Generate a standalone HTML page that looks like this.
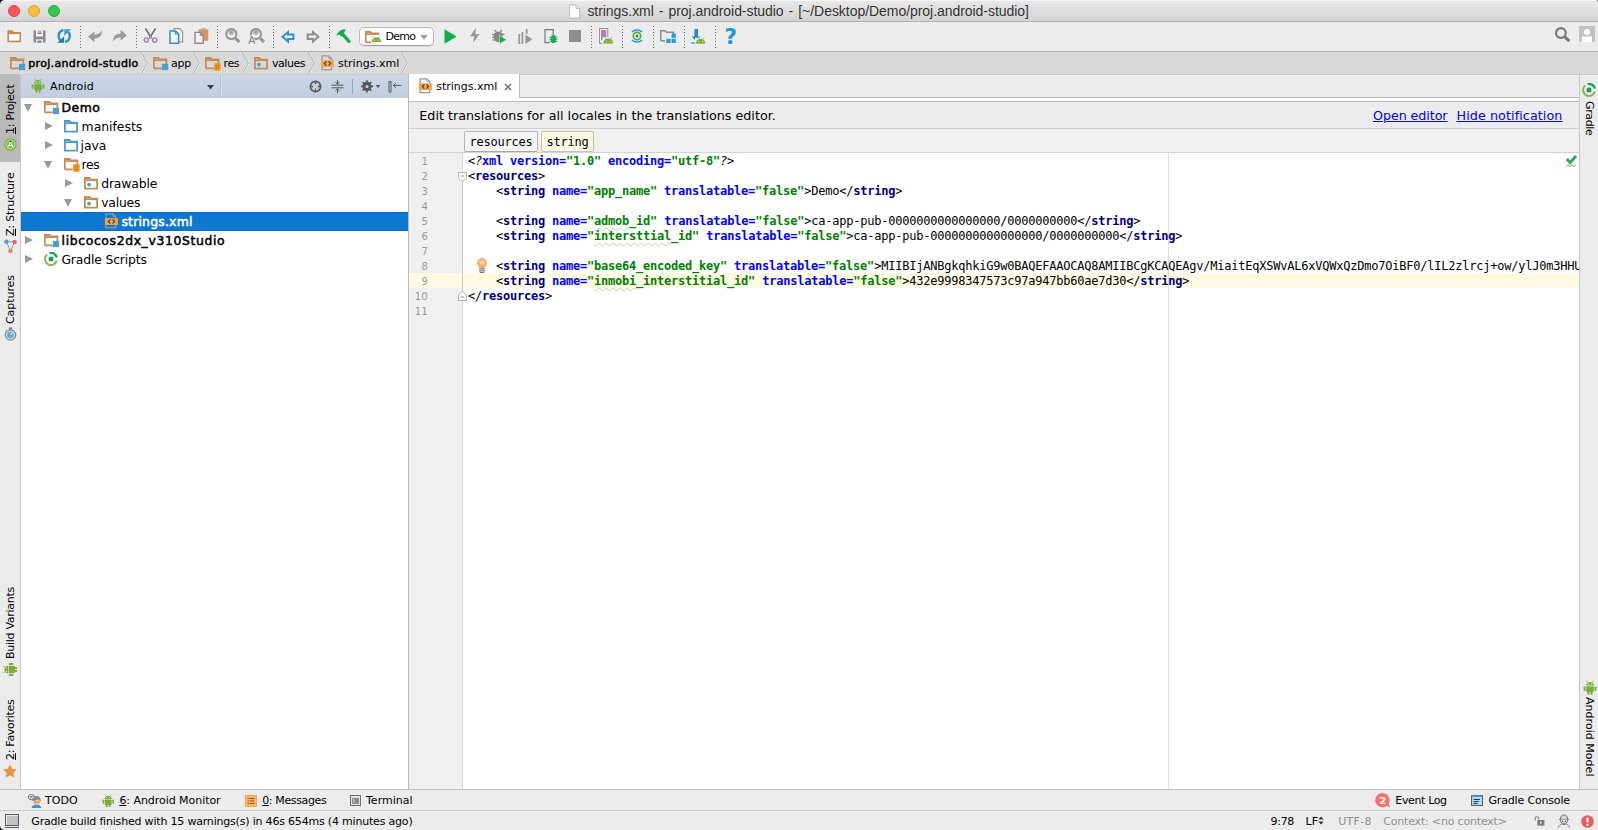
<!DOCTYPE html>
<html><head><meta charset="utf-8"><title>strings.xml - proj.android-studio</title>
<style>
*{box-sizing:border-box;margin:0;padding:0}
html,body{width:1598px;height:830px;overflow:hidden;background:#ececec}
body{font-family:"DejaVu Sans","Liberation Sans",sans-serif;font-size:11px;color:#000;position:relative}
.abs,.ic,.tx{position:absolute}
.tx{white-space:nowrap;line-height:1}
#title{left:0;top:0;width:1598px;height:22px;background:linear-gradient(#e9e9e9,#d3d3d3);border-bottom:1px solid #b2b2b2;box-shadow:inset 0 1px 0 #f5f5f5}
#title .t{position:absolute;left:587px;top:3px;font-family:"Liberation Sans",sans-serif;font-size:14px;letter-spacing:.03px;color:#404040;white-space:nowrap;line-height:16px}
.tl{position:absolute;top:5px;width:12px;height:12px;border-radius:50%}
#toolbar{left:0;top:22px;width:1598px;height:30px;background:#ececec;border-bottom:1px solid #afafaf;box-shadow:inset 0 -1px 0 #f0f0f0,inset 0 1px 0 #f0f0f0}
.sep{position:absolute;top:4px;width:1px;height:23px;background:repeating-linear-gradient(#6e6e6e 0 1px,transparent 1px 3px)}
#combo{position:absolute;left:359px;top:5px;width:75px;height:19px;background:#fff;border:1px solid #b9b9b9;border-bottom-color:#a2a2a2;border-radius:5px;box-shadow:0 1px 0 rgba(0,0,0,.06)}
#nav{left:0;top:52px;width:1598px;height:22px;background:#d9d9d9}
.chev{position:absolute;top:0;width:7px;height:22px}
#lstripe{left:0;top:74px;width:21px;height:715px;background:#ececec;border-right:1px solid #c6c6c6;border-top:1px solid #c8c8c8}
#rstripe{left:1579px;top:74px;width:19px;height:715px;background:#ececec;border-left:1px solid #c8c8c8;border-top:1px solid #c8c8c8}
.vt{position:absolute;white-space:nowrap;line-height:12px;height:12px;font-size:11px;transform-origin:0 0}
.vl{transform:rotate(-90deg)}
.vr{transform:rotate(90deg)}
#phead{left:21px;top:74px;width:387px;height:24px;background:linear-gradient(#cbd7e8,#c1cee0);border-top:1px solid #cdcdcd;border-bottom:1px solid #c8c8c8}
#tree{left:21px;top:98px;width:387px;height:691px;background:#fff;font-size:12.4px}
.row{position:absolute;left:0;width:387px;height:19px;white-space:nowrap}
.row .lb{position:absolute;top:0;line-height:19px}
.row.sel{background:#0d78d0;color:#fff;box-shadow:inset 0 1px 0 #0a6cc6,inset 0 -1px 0 #0a6cc6}
.b{font-weight:bold}
.arr{position:absolute;width:0;height:0}
.arr.r{border-left:8px solid #9a9a9a;border-top:4.5px solid transparent;border-bottom:4.5px solid transparent;top:5px}
.arr.d{border-top:8px solid #9a9a9a;border-left:4.5px solid transparent;border-right:4.5px solid transparent;top:6px}
#split{left:408px;top:74px;width:1px;height:715px;background:#b9b9b9}
#tabs{left:409px;top:74px;width:1170px;height:24px;background:#ececec;border-bottom:1px solid #bababa;border-top:1px solid #c8c8c8}
#tab1{position:absolute;left:0;top:-1px;width:111px;height:27px;background:#fff;border-right:1px solid #b9b9b9}
#strip{left:409px;top:98px;width:1170px;height:3px;background:#fff}
#notif{left:409px;top:101px;width:1170px;height:28px;background:#ececec;border-top:1px solid #bdbdbd;border-bottom:1px solid #cfcfcf;font-size:12.7px}
#notif a{color:#0000ee;text-decoration:underline;text-underline-offset:1px}
#crumbs{left:409px;top:129px;width:1170px;height:24px;background:#f0f0f0;border-bottom:1px solid #d4d4d4}
.cb{position:absolute;top:2px;height:21px;border:1px solid #b4b4b4;border-bottom-color:#a8a8a8;border-radius:2px;background:#f4f4f4;box-shadow:inset 0 -1px 0 #fcfcfc;font-family:"DejaVu Sans Mono","Liberation Mono",monospace;font-size:12px;letter-spacing:-.224px;line-height:21px;text-align:center}
#editor{left:409px;top:153px;width:1170px;height:636px;background:#fff;overflow:hidden}
#gutter{left:0;top:0;width:54px;height:637px;background:#f0f0f0;border-right:1px solid #d5d5d5}
#code{position:absolute;left:59px;top:1px;font-family:"DejaVu Sans Mono","Liberation Mono",monospace;font-size:12px;line-height:15px;white-space:pre;letter-spacing:-0.224px;color:#000}
#code .l{height:15px;display:block}
.tg{color:#000080;font-weight:bold}.an{color:#0000ff;font-weight:bold}.av{color:#008000;font-weight:bold}
.ty{text-decoration:underline wavy #bdd4b1;text-decoration-thickness:1px;text-underline-offset:2px}
.ln{position:absolute;font-size:11px;color:#999;height:15px;line-height:15px}
.fold{position:absolute;left:49px;width:9px;height:10px}
#bstripe{left:0;top:789px;width:1598px;height:21px;background:#ececec;border-top:1px solid #bebebe}
#status{left:0;top:810px;width:1598px;height:20px;background:#ececec;border-top:1px solid #c6c6c6}
.g{color:#8c8c8c}
</style></head><body>
<div id="title" class="abs"><div class="tl" style="left:8px;background:#fd5257;border:.5px solid #e2444a"></div><div class="tl" style="left:28px;background:#fdbc40;border:.5px solid #dea033"></div><div class="tl" style="left:48px;background:#34c84a;border:.5px solid #27aa35"></div><svg class="ic" style="left:569px;top:3.5px" width="12" height="15" viewBox="0 0 13 15"><path d="M.4.400h7.200l4 4v10.200H.4z" fill="#fff" stroke="#adadad" stroke-width=".9"/><path d="M7.600.4v4h4" fill="#ededed" stroke="#adadad" stroke-width=".8"/></svg><span class="tx" style="left:587.4px;top:4.16px;font-size:14px;font-family:'Liberation Sans',sans-serif;letter-spacing:-0.046px;color:#333;word-spacing:1.2px;">strings.xml - proj.android-studio - [~/Desktop/Demo/proj.android-studio]</span></div>
<div id="toolbar" class="abs"><svg class="ic" style="left:7px;top:8px" width="15" height="13" viewBox="0 0 15 13" ><path d="M.4 12.200V.2h5l1.600 1.800h7v10.200z" fill="#c48d58"/><path d="M2 4.200h10.400v6.400H2z" fill="#fff"/></svg><svg class="ic" style="left:33px;top:8px" width="13" height="13" viewBox="0 0 13 13" ><path d="M.5.5h12v12H.5z" fill="#8a8a8a"/><path d="M3 .5h7v6H3z" fill="#fff"/><path d="M4.6 2h4M4.6 3.6h4" stroke="#555" stroke-width=".9"/><path d="M3 9.3h7v3.2H3z" fill="#ececec"/><path d="M4.5 10.6h4v1.9h-4z" fill="#3b8fbe"/></svg><svg class="ic" style="left:57px;top:7px" width="15" height="14" viewBox="0 0 15 14" ><path d="M6.400 1.100A5.200 5.900 0 0 0 3.400 11.400" fill="none" stroke="#2d8dbd" stroke-width="2.200"/><path d="M.2 13.700h6.900V7.200z" fill="#1f80b2"/><path d="M8 12.900A5.200 5.900 0 0 0 11 2.600" fill="none" stroke="#2d8dbd" stroke-width="2.200"/><path d="M14.200.3H7.300v6.500z" fill="#3f9bc8"/></svg><svg class="ic" style="left:88px;top:8px" width="14" height="13" viewBox="0 0 14 13" ><path d="M0 6.6L6.4 1.6v3.2c3.6-.4 6.6-2 7.4-4.6C14.2 5 12 8.400 6.400 8.600V12.200z" fill="#9b9b9b"/></svg><svg class="ic" style="left:113px;top:7px" width="14" height="13" viewBox="0 0 14 13" ><g transform="rotate(180 7 6.5)"><path d="M0 6.6L6.4 1.6v3.2c3.6-.4 6.6-2 7.4-4.6C14.2 5 12 8.400 6.400 8.600V12.200z" fill="#9b9b9b"/></g></svg><svg class="ic" style="left:143px;top:6px" width="15" height="15" viewBox="0 0 15 15" ><path d="M2.400.4L8.600 10.400M12.600.4L6.400 10.400" stroke="#666" stroke-width="1.500" fill="none"/><circle cx="3.300" cy="12" r="2.100" fill="none" stroke="#b27cc8" stroke-width="1.500"/><circle cx="11.700" cy="12" r="2.100" fill="none" stroke="#b27cc8" stroke-width="1.500"/><rect x="6.700" y="8" width="1.600" height="1.600" fill="#fff" stroke="#6a6a6a" stroke-width=".5"/></svg><svg class="ic" style="left:169px;top:6px" width="15" height="16" viewBox="0 0 15 16" ><path d="M5 .600h5.600l3 3v10.200H5z" fill="#eee" stroke="#999" stroke-width="1.200"/><path d="M1 3h5.600l3 3v9.200H1z" fill="#f1f1f1" stroke="#3b8fbe" stroke-width="1.500"/><path d="M6.400 3v3.200h3.200" fill="none" stroke="#3b8fbe" stroke-width="1"/></svg><svg class="ic" style="left:194px;top:6px" width="15" height="16" viewBox="0 0 15 16" ><path d="M4.500 1.400h9.800v11.400H4.500z" fill="#d9965a"/><path d="M7.400.5h4v1.200h-4z" fill="#ececec" stroke="#888" stroke-width=".5"/><path d="M1 4.400h5.400l2.800 2.800v8H1z" fill="#f1f1f1" stroke="#8a8a8a" stroke-width="1.400"/><path d="M6.200 4.400v3h3" fill="none" stroke="#8a8a8a" stroke-width="1"/></svg><svg class="ic" style="left:225px;top:6px" width="16" height="16" viewBox="0 0 16 16" ><radialGradient id="g9a" cx=".5" cy=".32" r=".42"><stop offset="0" stop-color="#8f8f8f"/><stop offset=".35" stop-color="#b0b0b0"/><stop offset="1" stop-color="#f6f6f6"/></radialGradient><circle cx="6.300" cy="6.100" r="5" fill="url(#g9a)" stroke="#9a9a9a" stroke-width="2.300"/><path d="M10.400 10.200l4 4" stroke="#9a9a9a" stroke-width="3.200" stroke-linecap="butt"/></svg><svg class="ic" style="left:248.2px;top:6px" width="17" height="17" viewBox="0 0 17 17" ><radialGradient id="g10b" cx=".5" cy=".32" r=".42"><stop offset="0" stop-color="#8f8f8f"/><stop offset=".35" stop-color="#b0b0b0"/><stop offset="1" stop-color="#f6f6f6"/></radialGradient><circle cx="7.900" cy="6" r="5" fill="url(#g10b)" stroke="#9a9a9a" stroke-width="2.300"/><path d="M12 10.100l4 4" stroke="#9a9a9a" stroke-width="3.200" stroke-linecap="butt"/><text x=".3" y="16.200" font-family="Liberation Sans,sans-serif" font-size="10.500" fill="#808080" stroke="#ececec" stroke-width="1.400" paint-order="stroke">A</text></svg><svg class="ic" style="left:280.6px;top:7.699999999999999px" width="14" height="14" viewBox="0 0 14 14" ><path d="M1.600 6.800L7 2.100v2.500h5.400v4.400H7v2.500z" fill="none" stroke="#2e95c5" stroke-width="2" stroke-linejoin="miter"/></svg><svg class="ic" style="left:306.4px;top:7.699999999999999px" width="14" height="14" viewBox="0 0 14 14" ><path d="M12.400 6.800L7 2.100v2.500H1.600v4.400H7v2.500z" fill="none" stroke="#8e8e8e" stroke-width="2" stroke-linejoin="miter"/></svg><svg class="ic" style="left:336px;top:7px" width="15" height="15" viewBox="0 0 15 15" ><path d="M6 4.600L13 12.400" stroke="#12ad4d" stroke-width="3.200" stroke-linecap="round"/><path d="M.2 6.600C1.800 2.800 5.600 0 9.600.4L8 4 5.200 7.400 3.400 5.600z" fill="#12ad4d"/></svg><svg class="ic" style="left:444px;top:7px" width="13" height="15" viewBox="0 0 13 15" ><path d="M.5.2L12.600 7.500.5 14.800z" fill="#12ad4d"/></svg><svg class="ic" style="left:470px;top:6px" width="10" height="15" viewBox="0 0 10 15" ><path d="M5.800 0L0 8.200h4L3.200 15l6.400-9H5.400z" fill="#9a9a9a"/></svg><svg class="ic" style="left:492px;top:7px" width="15" height="15" viewBox="0 0 15 15" ><ellipse cx="6.200" cy="7.800" rx="4.600" ry="5.400" fill="#858585"/><path d="M2.600 1l2 2.400M9.800 1l-2 2.400M0 5.400h3M0 8.200h3M0 11h3M9.400 5.400h3" stroke="#858585" stroke-width="1.200"/><path d="M7.400 6.400L14.600 10.700 7.400 15z" fill="#12ad4d" stroke="#ececec" stroke-width=".6"/></svg><svg class="ic" style="left:518px;top:7px" width="15" height="15" viewBox="0 0 15 15" ><path d="M1.200 5v10M4.400 3v12" stroke="#999" stroke-width="1.800"/><path d="M7.800 0h1.800v5H7.800z" fill="#999"/><path d="M7.400 5.600L14.400 10.300 7.400 15z" fill="#999"/></svg><svg class="ic" style="left:544px;top:7px" width="14" height="15" viewBox="0 0 14 15" ><path d="M1 .600h8.200v13H1z" fill="none" stroke="#777" stroke-width="1.200"/><path d="M5.200 6.600h8.800v8.400H5.200z" fill="#ececec"/><ellipse cx="9.400" cy="10.400" rx="2.600" ry="3.800" fill="#12ad4d"/><path d="M5.400 8.200h8M5.400 10.400h8M5.400 12.600h8M7.600 5.800l1 1.400M11.200 5.800l-1 1.400" stroke="#12ad4d" stroke-width="1"/></svg><svg class="ic" style="left:569px;top:8px" width="12" height="12" viewBox="0 0 12 12" ><rect width="12" height="12" fill="#8f8f8f"/></svg><svg class="ic" style="left:599px;top:6px" width="15" height="16" viewBox="0 0 15 16" ><path d="M.600.5h8.200v14.800H.600z" fill="#fff" stroke="#8a8a8a" stroke-width="1"/><path d="M2 2h5.400v10.400H2z" fill="#b07fc4"/><path d="M3.400 9h11.600v7H3.400z" fill="#ececec"/><path d="M4.4 15.2a4.8 4.8 0 0 1 9.6 0z" fill="#7dad36"/><path d="M6.5600000000000005 10.6l-1-1.6M11.84 10.6l1-1.6" stroke="#7dad36" stroke-width=".8" fill="none"/><circle cx="7.28" cy="13.184000000000001" r=".55" fill="#fff"/><circle cx="11.120000000000001" cy="13.184000000000001" r=".55" fill="#fff"/><path d="M4.400 15.600h9.600v.4H4.400z" fill="#7dad36"/></svg><svg class="ic" style="left:630px;top:7px" width="14" height="14" viewBox="0 0 14 14" ><circle cx="7" cy="7" r="3.700" fill="none" stroke="#62a83c" stroke-width="1.700"/><circle cx="7" cy="7" r="1.500" fill="#1d9e4c"/><path d="M2 3C4.400.2 9.600.2 12 3" fill="none" stroke="#1d9ce0" stroke-width="1.500"/><path d="M2 11c2.400 2.800 7.600 2.800 10 0" fill="none" stroke="#1d9ce0" stroke-width="1.500"/></svg><svg class="ic" style="left:660px;top:8px" width="16" height="13" viewBox="0 0 16 13" ><path d="M.7 10.800V.7h4.400l1.400 1.600h7v2" fill="none" stroke="#8a8a8a" stroke-width="1.400"/><path d="M.7 10.800h4.500" stroke="#8a8a8a" stroke-width="1.400"/><rect x="11.600" y="3.600" width="4.200" height="4.200" fill="#1d9ce0"/><rect x="6.400" y="8.800" width="4.200" height="4.200" fill="#1d9ce0"/><rect x="11.600" y="8.800" width="4.200" height="4.200" fill="#1d9ce0"/></svg><svg class="ic" style="left:691px;top:7px" width="15" height="15" viewBox="0 0 15 15" ><path d="M3.400 0h3.600v7.400h2.600L5.200 12.400.8 7.400h2.600z" fill="#1a8cc8"/><path d="M.4 13.400h3.400v1.200H.4z" fill="#1a8cc8"/><path d="M4 8.600h11v6.400H4z" fill="#ececec"/><path d="M4.8 14.600000000000001a4.8 4.8 0 0 1 9.6 0z" fill="#7dad36"/><path d="M6.96 10.0l-1-1.6M12.239999999999998 10.0l1-1.6" stroke="#7dad36" stroke-width=".8" fill="none"/><circle cx="7.68" cy="12.584" r=".55" fill="#fff"/><circle cx="11.52" cy="12.584" r=".55" fill="#fff"/><path d="M4.800 15h9.600" stroke="#7dad36" stroke-width=".4"/></svg><svg class="ic" style="left:1554px;top:4px" width="16" height="17" viewBox="0 0 16 17" ><circle cx="6.900" cy="7.100" r="4.900" fill="none" stroke="#7a7a7a" stroke-width="2.200"/><path d="M10.800 10.800l3.600 3.400" stroke="#7a7a7a" stroke-width="3" stroke-linecap="round"/></svg><svg class="ic" style="left:1579px;top:4px" width="16" height="16" viewBox="0 0 16 16" ><rect width="16" height="16" fill="#c2c2c2"/><circle cx="8" cy="6" r="3" fill="#fff"/><path d="M3 10.500h10V16H3z" fill="#fff"/></svg><i class="sep" style="left:80px"></i><i class="sep" style="left:136px"></i><i class="sep" style="left:217px"></i><i class="sep" style="left:273px"></i><i class="sep" style="left:329px"></i><i class="sep" style="left:591px"></i><i class="sep" style="left:622px"></i><i class="sep" style="left:653px"></i><i class="sep" style="left:684px"></i><i class="sep" style="left:715px"></i><div id="combo"><svg class="ic" style="left:5px;top:2.5px" width="16" height="14" viewBox="0 0 16 14" ><path d="M.8 11.400V.8h4.600l1.400 1.700h6.600v5" fill="none" stroke="#c48d58" stroke-width="1.800"/><path d="M.8 11.400h8" stroke="#c48d58" stroke-width="1.800"/><path d="M.8.800h4.600l1.400 1.700H.8z" fill="#c48d58"/><path d="M.8 2.500h12.600v1.500H.8z" fill="#c48d58"/><rect x="8.900" y="6.900" width="6.200" height="6.200" fill="none"/></svg><svg class="ic" style="left:11px;top:7px" width="11" height="8" viewBox="0 0 11 8"><rect width="11" height="8" fill="#fff"/><path d="M0.6 7.1000000000000005a4.9 4.9 0 0 1 9.8 0z" fill="#7dad36"/><path d="M2.805 2.4000000000000004l-1-1.6M8.195 2.4000000000000004l1-1.6" stroke="#7dad36" stroke-width=".8" fill="none"/><circle cx="3.54" cy="5.042" r=".55" fill="#fff"/><circle cx="7.460000000000001" cy="5.042" r=".55" fill="#fff"/></svg><svg class="ic" style="left:60px;top:7px" width="8" height="5" viewBox="0 0 8 5"><path d="M.3 0h7.400L4 4.800z" fill="#999"/></svg></div><span class="tx" style="left:385.5px;top:8.69px;font-size:11px;letter-spacing:-0.772px;">Demo</span><span class="tx" style="left:724.6px;top:3.61px;font-size:21.5px;font-weight:bold;color:#1b9ae0;">?</span></div>
<div id="nav" class="abs"><svg class="ic" style="left:10px;top:5px" width="16" height="14" viewBox="0 0 16 14" ><path d="M.8 11.400V.8h4.600l1.400 1.700h6.600v5" fill="none" stroke="#c48d58" stroke-width="1.800"/><path d="M.8 11.400h8" stroke="#c48d58" stroke-width="1.800"/><path d="M.8.800h4.600l1.400 1.700H.8z" fill="#c48d58"/><path d="M.8 2.500h12.600v1.500H.8z" fill="#c48d58"/><rect x="8.900" y="6.900" width="6.200" height="6.200" fill="#4a9fcb"/></svg><span class="tx" style="left:28.2px;top:5.69px;font-size:11px;letter-spacing:0.340px;-webkit-text-stroke:.45px #000;">proj.android-studio</span><svg class="chev" style="left:141px" viewBox="0 0 7 22"><path d="M.5 0l6 11-6 11" fill="none" stroke="#a9a9a9" stroke-width="1"/><path d="M1.300 0l6 11-6 11" fill="none" stroke="#ececec" stroke-width=".8"/></svg><svg class="ic" style="left:153px;top:5px" width="16" height="14" viewBox="0 0 16 14" ><path d="M.8 11.400V.8h4.600l1.400 1.700h6.600v5" fill="none" stroke="#c48d58" stroke-width="1.800"/><path d="M.8 11.400h8" stroke="#c48d58" stroke-width="1.800"/><path d="M.8.800h4.600l1.400 1.700H.8z" fill="#c48d58"/><path d="M.8 2.500h12.600v1.500H.8z" fill="#c48d58"/><rect x="8.900" y="6.900" width="6.200" height="6.200" fill="#4a9fcb"/></svg><span class="tx" style="left:171px;top:5.69px;font-size:11px;letter-spacing:-0.240px;">app</span><svg class="chev" style="left:193px" viewBox="0 0 7 22"><path d="M.5 0l6 11-6 11" fill="none" stroke="#a9a9a9" stroke-width="1"/><path d="M1.300 0l6 11-6 11" fill="none" stroke="#ececec" stroke-width=".8"/></svg><svg class="ic" style="left:205px;top:5px" width="16" height="14" viewBox="0 0 16 14" ><path d="M.8 11.400V.8h4.600l1.400 1.700h6.600v5" fill="none" stroke="#c48d58" stroke-width="1.800"/><path d="M.8 11.400h8" stroke="#c48d58" stroke-width="1.800"/><path d="M.8.800h4.600l1.400 1.700H.8z" fill="#c48d58"/><path d="M.8 2.500h12.600v1.500H.8z" fill="#c48d58"/><rect x="9.200" y="6.200" width="6.400" height="7.600" fill="#f5a623"/><path d="M9.200 8.700h6.400M9.200 11.200h6.400M11.300 6.200v7.600M13.500 6.200v7.600" stroke="#c97a12" stroke-width=".7"/></svg><span class="tx" style="left:223.5px;top:5.69px;font-size:11px;letter-spacing:-0.360px;">res</span><svg class="chev" style="left:242px" viewBox="0 0 7 22"><path d="M.5 0l6 11-6 11" fill="none" stroke="#a9a9a9" stroke-width="1"/><path d="M1.300 0l6 11-6 11" fill="none" stroke="#ececec" stroke-width=".8"/></svg><svg class="ic" style="left:253.5px;top:5px" width="15" height="13" viewBox="0 0 15 13" ><path d="M.9 11.600V.9h4.500l1.400 1.700h6.300v9z" fill="none" stroke="#c48d58" stroke-width="1.800" stroke-linejoin="miter"/><path d="M.9.900h4.500l1.400 1.700H.9z" fill="#c48d58"/><path d="M.9 2.600h12.200v1.500H.9z" fill="#c48d58"/><circle cx="5" cy="7.600" r="1.900" fill="#4a9fcb"/></svg><span class="tx" style="left:272px;top:5.69px;font-size:11px;letter-spacing:-0.464px;">values</span><svg class="chev" style="left:307.5px" viewBox="0 0 7 22"><path d="M.5 0l6 11-6 11" fill="none" stroke="#a9a9a9" stroke-width="1"/><path d="M1.300 0l6 11-6 11" fill="none" stroke="#ececec" stroke-width=".8"/></svg><svg class="ic" style="left:320.5px;top:3px" width="14" height="16" viewBox="0 0 14 16" ><path d="M1 5.200V.9h7l2.600 2.600v1.700M1 12v2.700h9.600V12" fill="none" stroke="#9a9a9a" stroke-width="1.300"/><path d="M7.800.9v2.800h2.800" fill="none" stroke="#9a9a9a" stroke-width=".9"/><rect x="0" y="5.200" width="12.900" height="6.800" fill="#f7a24a"/><path d="M5.400 6.500L3.300 8.600l2.100 2.100M7.500 6.500l2.100 2.100-2.100 2.100" fill="none" stroke="#46423c" stroke-width="1.200"/></svg><span class="tx" style="left:338px;top:5.69px;font-size:11px;letter-spacing:0.010px;">strings.xml</span><svg class="chev" style="left:400.5px" viewBox="0 0 7 22"><path d="M.5 0l6 11-6 11" fill="none" stroke="#a9a9a9" stroke-width="1"/><path d="M1.300 0l6 11-6 11" fill="none" stroke="#ececec" stroke-width=".8"/></svg></div>
<div id="lstripe" class="abs"><div class="abs" style="left:0;top:-1px;width:20px;height:88px;background:#bababa"></div></div>
<div id="rstripe" class="abs"></div>
<span class="vt vl" style="left:5.30px;top:133.8px;font-size:11px;letter-spacing:-0.234px;"><u>1</u>: Project</span><span class="vt vl" style="left:5.30px;top:236.3px;font-size:11px;letter-spacing:-0.202px;"><u>Z</u>: Structure</span><span class="vt vl" style="left:5.30px;top:324.2px;font-size:11px;letter-spacing:-0.059px;">Captures</span><span class="vt vl" style="left:5.30px;top:658.7px;font-size:11px;letter-spacing:-0.276px;">Build Variants</span><span class="vt vl" style="left:5.30px;top:759.5px;font-size:11px;letter-spacing:-0.283px;"><u>2</u>: Favorites</span><span class="vt vr" style="left:1595.20px;top:100.5px;font-size:11px;letter-spacing:-0.349px;">Gradle</span><span class="vt vr" style="left:1595.20px;top:697px;font-size:11px;letter-spacing:0.034px;">Android Model</span><svg class="ic" style="left:4px;top:138px" width="13" height="13" viewBox="0 0 13 13"><circle cx="6.500" cy="6.500" r="6.300" fill="#7db843"/><circle cx="6.500" cy="6.500" r="4.300" fill="none" stroke="#e9f3dc" stroke-width=".6"/><path d="M6.500 3.400L3.800 9.600M6.500 3.400l2.700 6.200M4.700 7.600h3.600" stroke="#fff" stroke-width="1" fill="none"/><circle cx="6.500" cy="3.200" r="1" fill="#4d7d27"/></svg><svg class="ic" style="left:4px;top:239px" width="13" height="15" viewBox="0 0 13 15"><path d="M2.300 2.600L6.500 12M10.700 3l-4.200 9M2.300 2.600L10.700 3" stroke="#999" stroke-width="1"/><circle cx="2.400" cy="2.700" r="2.200" fill="#4a9fd0"/><circle cx="10.600" cy="3" r="2.200" fill="#e66a60"/><circle cx="6.500" cy="12" r="2.300" fill="#cf9560"/></svg><svg class="ic" style="left:4px;top:327px" width="13" height="14" viewBox="0 0 13 14"><circle cx="6.500" cy="8" r="5.200" fill="#cfe3f0" stroke="#7f8a92" stroke-width="1.200"/><circle cx="6.500" cy="8" r="3.400" fill="#62abd8"/><path d="M5.200.8h2.600v2H5.200zM1.600 3.400l1.200-1.200" fill="#7f8a92" stroke="#7f8a92" stroke-width=".9"/><path d="M6.500 8l2-2.400" stroke="#f2f7fa" stroke-width="1.100"/></svg><svg class="ic" style="transform:rotate(-90deg);left:3px;top:662px" width="14" height="15" viewBox="0 0 14 15" transform="rotate(-90)"><path d="M3.2 5.6a3.8 3.6 0 0 1 7.6 0z" fill="#7dad36"/><path d="M4.6 2.3l-1-1.6M9.4 2.3l1-1.6" stroke="#7dad36" stroke-width=".8"/><circle cx="5.3" cy="3.9" r=".55" fill="#fff"/><circle cx="8.7" cy="3.9" r=".55" fill="#fff"/><rect x="3.2" y="6.2" width="7.6" height="6" rx=".8" fill="#7dad36"/><rect x="0.6" y="6.2" width="1.9" height="4.8" rx=".95" fill="#7dad36"/><rect x="11.5" y="6.2" width="1.9" height="4.8" rx=".95" fill="#7dad36"/><rect x="4.5" y="11" width="1.9" height="3.8" rx=".9" fill="#7dad36"/><rect x="7.6" y="11" width="1.9" height="3.8" rx=".9" fill="#7dad36"/></svg><svg class="ic" style="left:3px;top:764px" width="14" height="14" viewBox="0 0 14 14"><path d="M7 .3l2.100 4.500 4.800.600-3.500 3.400.9 4.900L7 11.300l-4.300 2.400.9-4.900L.1 5.400l4.800-.6z" fill="#e8963c"/></svg><svg class="ic" style="left:1582px;top:83px" width="14" height="14" viewBox="0 0 14 14" ><path d="M3.140 2.400A6 6 0 1 0 12.800 8.550" fill="none" stroke="#8fb457" stroke-width="2"/><path d="M5.700 1.100A6 6 0 0 1 12.800 5.450" fill="none" stroke="#10a35b" stroke-width="2.300"/><rect x="4.700" y="4.700" width="4.600" height="4.600" rx="1.300" fill="#10a35b"/></svg><svg class="ic" style="left:1582.5px;top:680px" width="14" height="15" viewBox="0 0 14 15" ><path d="M3.2 5.6a3.8 3.6 0 0 1 7.6 0z" fill="#7dad36"/><path d="M4.6 2.3l-1-1.6M9.4 2.3l1-1.6" stroke="#7dad36" stroke-width=".8"/><circle cx="5.3" cy="3.9" r=".55" fill="#fff"/><circle cx="8.7" cy="3.9" r=".55" fill="#fff"/><rect x="3.2" y="6.2" width="7.6" height="6" rx=".8" fill="#7dad36"/><rect x="0.6" y="6.2" width="1.9" height="4.8" rx=".95" fill="#7dad36"/><rect x="11.5" y="6.2" width="1.9" height="4.8" rx=".95" fill="#7dad36"/><rect x="4.5" y="11" width="1.9" height="3.8" rx=".9" fill="#7dad36"/><rect x="7.6" y="11" width="1.9" height="3.8" rx=".9" fill="#7dad36"/></svg><div id="phead" class="abs"><svg class="ic" style="left:10px;top:3px" width="14" height="15" viewBox="0 0 14 15" ><path d="M3.2 5.6a3.8 3.6 0 0 1 7.6 0z" fill="#7dad36"/><path d="M4.6 2.3l-1-1.6M9.4 2.3l1-1.6" stroke="#7dad36" stroke-width=".8"/><circle cx="5.3" cy="3.9" r=".55" fill="#fff"/><circle cx="8.7" cy="3.9" r=".55" fill="#fff"/><rect x="3.2" y="6.2" width="7.6" height="6" rx=".8" fill="#7dad36"/><rect x="0.6" y="6.2" width="1.9" height="4.8" rx=".95" fill="#7dad36"/><rect x="11.5" y="6.2" width="1.9" height="4.8" rx=".95" fill="#7dad36"/><rect x="4.5" y="11" width="1.9" height="3.8" rx=".9" fill="#7dad36"/><rect x="7.6" y="11" width="1.9" height="3.8" rx=".9" fill="#7dad36"/></svg><span class="tx" style="left:29px;top:5.69px;font-size:11px;letter-spacing:0.181px;">Android</span><svg class="ic" style="left:186px;top:10px" width="7" height="5" viewBox="0 0 7 5"><path d="M0 0h7L3.500 4.600z" fill="#3f3f3f"/></svg><i class="abs" style="left:199px;top:0;width:1px;height:22px;background:#b4bfcd"></i><i class="abs" style="left:200px;top:0;width:1px;height:22px;background:#d9e1ec"></i><svg class="ic" style="left:288px;top:5px" width="13" height="13" viewBox="0 0 13 13"><circle cx="6.500" cy="6.500" r="5.100" fill="none" stroke="#595959" stroke-width="1.700"/><path d="M6.500 1v3.200M6.500 8.800V12M1 6.500h3.200M8.800 6.500H12" stroke="#595959" stroke-width="1.300"/></svg><svg class="ic" style="left:310px;top:5px" width="13" height="13" viewBox="0 0 13 13"><path d="M.5 5.200h12M.5 7.800h12" stroke="#595959" stroke-width="1"/><path d="M6.500 0v4M4.400 2.200l2.100 2 2.100-2M6.500 13V9M4.400 10.800l2.100-2 2.100 2" fill="none" stroke="#595959" stroke-width="1"/></svg><i class="abs" style="left:331px;top:4px;width:1px;height:15px;background:#9aa3af"></i><svg class="ic" style="left:340px;top:5px" width="20" height="13" viewBox="0 0 20 13"><circle cx="6" cy="6.400" r="3.300" fill="none" stroke="#595959" stroke-width="2.600"/><path d="M6 .3v12.200M.0 6.400h12M1.700 2.100l8.600 8.600M10.300 2.100L1.700 10.700" stroke="#595959" stroke-width="1.700"/><circle cx="6" cy="6.400" r="1.500" fill="#c5d1e3"/><path d="M14.600 5h4.800L17 8z" fill="#595959"/></svg><svg class="ic" style="left:367px;top:6px" width="14" height="12" viewBox="0 0 14 12"><path d="M1 .500h2v10.600H1z" fill="none" stroke="#595959" stroke-width="1"/><path d="M5.400 4.400h8M5.400 4.400l2.400-2.200M5.400 4.400l2.400 2.200" fill="none" stroke="#595959" stroke-width="1"/></svg></div>
<div id="tree" class="abs"><div class="row" style="top:0px"><i class="arr d" style="left:3px"></i><svg class="ic" style="left:23px;top:3px" width="16" height="14" viewBox="0 0 16 14" ><path d="M.8 11.400V.8h4.600l1.400 1.700h6.600v5" fill="none" stroke="#c48d58" stroke-width="1.800"/><path d="M.8 11.400h8" stroke="#c48d58" stroke-width="1.800"/><path d="M.8.800h4.600l1.400 1.700H.8z" fill="#c48d58"/><path d="M.8 2.500h12.600v1.500H.8z" fill="#c48d58"/><rect x="8.900" y="6.900" width="6.200" height="6.200" fill="#4a9fcb"/></svg><span class="tx" style="left:40.6px;top:3.51px;font-size:12.4px;letter-spacing:0.443px;-webkit-text-stroke:.5px;">Demo</span></div>
<div class="row" style="top:19px"><i class="arr r" style="left:24px"></i><svg class="ic" style="left:43px;top:3px" width="15" height="13" viewBox="0 0 15 13" ><path d="M.9 11.600V.9h4.500l1.400 1.700h6.300v9z" fill="none" stroke="#4f9dc3" stroke-width="1.800" stroke-linejoin="miter"/><path d="M.9.900h4.500l1.400 1.700H.9z" fill="#4f9dc3"/><path d="M.9 2.600h12.200v1.500H.9z" fill="#4f9dc3"/></svg><span class="tx" style="left:60.599999999999994px;top:3.51px;font-size:12.4px;letter-spacing:-0.013px;">manifests</span></div>
<div class="row" style="top:38px"><i class="arr r" style="left:24px"></i><svg class="ic" style="left:43px;top:3px" width="15" height="13" viewBox="0 0 15 13" ><path d="M.9 11.600V.9h4.500l1.400 1.700h6.300v9z" fill="none" stroke="#4f9dc3" stroke-width="1.800" stroke-linejoin="miter"/><path d="M.9.900h4.500l1.400 1.700H.9z" fill="#4f9dc3"/><path d="M.9 2.600h12.200v1.500H.9z" fill="#4f9dc3"/></svg><span class="tx" style="left:59.599999999999994px;top:3.51px;font-size:12.4px;letter-spacing:-0.092px;">java</span></div>
<div class="row" style="top:57px"><i class="arr d" style="left:23px"></i><svg class="ic" style="left:43px;top:3px" width="16" height="14" viewBox="0 0 16 14" ><path d="M.8 11.400V.8h4.600l1.400 1.700h6.600v5" fill="none" stroke="#c48d58" stroke-width="1.800"/><path d="M.8 11.400h8" stroke="#c48d58" stroke-width="1.800"/><path d="M.8.800h4.600l1.400 1.700H.8z" fill="#c48d58"/><path d="M.8 2.500h12.600v1.500H.8z" fill="#c48d58"/><rect x="9.200" y="6.200" width="6.400" height="7.600" fill="#f5a623"/><path d="M9.200 8.700h6.400M9.200 11.200h6.400M11.300 6.200v7.600M13.500 6.200v7.600" stroke="#c97a12" stroke-width=".7"/></svg><span class="tx" style="left:60.599999999999994px;top:3.51px;font-size:12.4px;letter-spacing:-0.435px;">res</span></div>
<div class="row" style="top:76px"><i class="arr r" style="left:44px"></i><svg class="ic" style="left:63px;top:3px" width="15" height="13" viewBox="0 0 15 13" ><path d="M.9 11.600V.9h4.500l1.400 1.700h6.300v9z" fill="none" stroke="#c48d58" stroke-width="1.800" stroke-linejoin="miter"/><path d="M.9.900h4.500l1.400 1.700H.9z" fill="#c48d58"/><path d="M.9 2.600h12.200v1.500H.9z" fill="#c48d58"/><circle cx="5" cy="7.600" r="1.900" fill="#4a9fcb"/></svg><span class="tx" style="left:80.2px;top:3.51px;font-size:12.4px;letter-spacing:-0.152px;">drawable</span></div>
<div class="row" style="top:95px"><i class="arr d" style="left:43px"></i><svg class="ic" style="left:63px;top:3px" width="15" height="13" viewBox="0 0 15 13" ><path d="M.9 11.600V.9h4.500l1.400 1.700h6.300v9z" fill="none" stroke="#c48d58" stroke-width="1.800" stroke-linejoin="miter"/><path d="M.9.900h4.500l1.400 1.700H.9z" fill="#c48d58"/><path d="M.9 2.600h12.200v1.500H.9z" fill="#c48d58"/><circle cx="5" cy="7.600" r="1.900" fill="#4a9fcb"/></svg><span class="tx" style="left:80.2px;top:3.51px;font-size:12.4px;letter-spacing:-0.219px;">values</span></div>
<div class="row sel" style="top:114px"><svg class="ic" style="left:84px;top:1px" width="14" height="16" viewBox="0 0 14 16" ><path d="M1 5.200V.9h7l2.600 2.600v1.700M1 12v2.700h9.600V12" fill="none" stroke="#9a9a9a" stroke-width="1.300"/><path d="M7.800.9v2.800h2.800" fill="none" stroke="#9a9a9a" stroke-width=".9"/><rect x="0" y="5.200" width="12.900" height="6.800" fill="#f7a24a"/><path d="M5.400 6.500L3.300 8.600l2.100 2.100M7.500 6.500l2.100 2.100-2.100 2.100" fill="none" stroke="#46423c" stroke-width="1.200"/></svg><span class="tx" style="left:100.4px;top:3.51px;font-size:12.4px;letter-spacing:0.217px;-webkit-text-stroke:.5px;">strings.xml</span></div>
<div class="row" style="top:133px"><i class="arr r" style="left:4px"></i><svg class="ic" style="left:23px;top:3px" width="16" height="14" viewBox="0 0 16 14" ><path d="M.8 11.400V.8h4.600l1.400 1.700h6.600v5" fill="none" stroke="#c48d58" stroke-width="1.800"/><path d="M.8 11.400h8" stroke="#c48d58" stroke-width="1.800"/><path d="M.8.800h4.600l1.400 1.700H.8z" fill="#c48d58"/><path d="M.8 2.500h12.600v1.500H.8z" fill="#c48d58"/><rect x="8.900" y="6.900" width="6.200" height="6.200" fill="#4a9fcb"/></svg><span class="tx" style="left:40.6px;top:3.51px;font-size:12.4px;letter-spacing:0.631px;-webkit-text-stroke:.5px;">libcocos2dx_v310Studio</span></div>
<div class="row" style="top:152px"><i class="arr r" style="left:4px"></i><svg class="ic" style="left:23px;top:2px" width="14" height="14" viewBox="0 0 14 14" ><path d="M3.140 2.400A6 6 0 1 0 12.800 8.550" fill="none" stroke="#8fb457" stroke-width="2"/><path d="M5.700 1.100A6 6 0 0 1 12.800 5.450" fill="none" stroke="#10a35b" stroke-width="2.300"/><rect x="4.700" y="4.700" width="4.600" height="4.600" rx="1.300" fill="#10a35b"/></svg><span class="tx" style="left:40.4px;top:3.51px;font-size:12.4px;letter-spacing:-0.154px;">Gradle Scripts</span></div></div>
<div id="split" class="abs"></div>
<div id="tabs" class="abs"><div id="tab1"><svg class="ic" style="left:10px;top:4px" width="14" height="16" viewBox="0 0 14 16" ><path d="M1 5.200V.9h7l2.600 2.600v1.700M1 12v2.700h9.600V12" fill="none" stroke="#9a9a9a" stroke-width="1.300"/><path d="M7.800.9v2.800h2.800" fill="none" stroke="#9a9a9a" stroke-width=".9"/><rect x="0" y="5.200" width="12.900" height="6.800" fill="#f7a24a"/><path d="M5.400 6.500L3.300 8.600l2.100 2.100M7.500 6.500l2.100 2.100-2.100 2.100" fill="none" stroke="#46423c" stroke-width="1.200"/></svg><span class="tx" style="left:27.19999999999999px;top:6.69px;font-size:11px;letter-spacing:-0.009px;">strings.xml</span><svg class="ic" style="left:95px;top:9px" width="8" height="8" viewBox="0 0 8 8"><path d="M1 1l6 6M7 1L1 7" stroke="#6e6e6e" stroke-width="1.500"/></svg></div></div>
<div id="strip" class="abs"></div>
<div id="notif" class="abs"><span class="tx" style="left:10.300000000000011px;top:8.26px;font-size:12.7px;letter-spacing:0.019px;">Edit translations for all locales in the translations editor.</span><span class="tx" style="left:964px;top:8.26px;font-size:12.7px;letter-spacing:-0.070px;color:#0000ee;"><a>Open editor</a></span><span class="tx" style="left:1047.5px;top:8.26px;font-size:12.7px;letter-spacing:0.099px;color:#0000ee;"><a>Hide notification</a></span></div>
<div id="crumbs" class="abs"><div class="cb" style="left:55px;width:74px">resources</div><div class="cb" style="left:132px;width:53px;background:#fbf9e1;border-color:#c4c2ac">string</div></div>
<div id="editor" class="abs"><div class="abs" style="left:0;top:120px;width:1170px;height:15px;background:#fffae3"></div><div id="gutter" class="abs"><div class="abs" style="left:0;top:120px;width:53px;height:15px;background:#fffae3"></div><div class="ln" style="top:1px;left:12.5px;font-size:10px">1</div><div class="ln" style="top:16px;left:12.5px;font-size:10px">2</div><div class="ln" style="top:31px;left:12.5px;font-size:10px">3</div><div class="ln" style="top:46px;left:12.5px;font-size:10px">4</div><div class="ln" style="top:61px;left:12.5px;font-size:10px">5</div><div class="ln" style="top:76px;left:12.5px;font-size:10px">6</div><div class="ln" style="top:91px;left:12.5px;font-size:10px">7</div><div class="ln" style="top:106px;left:12.5px;font-size:10px">8</div><div class="ln" style="top:121px;left:12.5px;font-size:10px">9</div><div class="ln" style="top:136px;left:5.8px;font-size:10px">10</div><div class="ln" style="top:151px;left:5.8px;font-size:10px">11</div></div><div class="abs" style="left:53px;top:24px;width:1px;height:118px;background:#c8c8c8"></div><div class="abs" style="left:759px;top:0;width:1px;height:637px;background:#dedede"></div><div id="code"><span class="l"><i>&lt;?</i><span class="an">xml version=</span><span class="av">"1.0"</span><span class="an"> encoding=</span><span class="av">"utf-8"</span><i>?&gt;</i></span><span class="l">&lt;<span class="tg">resources</span>&gt;</span><span class="l">    &lt;<span class="tg">string</span> <span class="an">name=</span><span class="av">"app_name"</span> <span class="an">translatable=</span><span class="av">"false"</span>&gt;Demo&lt;/<span class="tg">string</span>&gt;</span><span class="l"></span><span class="l">    &lt;<span class="tg">string</span> <span class="an">name=</span><span class="av">"<span class="ty">admob</span>_id"</span> <span class="an">translatable=</span><span class="av">"false"</span>&gt;ca-app-pub-0000000000000000/0000000000&lt;/<span class="tg">string</span>&gt;</span><span class="l">    &lt;<span class="tg">string</span> <span class="an">name=</span><span class="av">"<span class="ty">intersttial</span>_id"</span> <span class="an">translatable=</span><span class="av">"false"</span>&gt;ca-app-pub-0000000000000000/0000000000&lt;/<span class="tg">string</span>&gt;</span><span class="l"></span><span class="l">    &lt;<span class="tg">string</span> <span class="an">name=</span><span class="av">"base64_encoded_key"</span> <span class="an">translatable=</span><span class="av">"false"</span>&gt;MIIBIjANBgkqhkiG9w0BAQEFAAOCAQ8AMIIBCgKCAQEAgv/MiaitEqXSWvAL6xVQWxQzDmo7OiBF0/lIL2zlrcj+ow/ylJ0m3HHUxK8fQ2</span><span class="l">    &lt;<span class="tg">string</span> <span class="an">name=</span><span class="av">"<span class="ty">inmobi</span>_interstitial_id"</span> <span class="an">translatable=</span><span class="av">"false"</span>&gt;432e9998347573c97a947bb60ae7d30&lt;/<span class="tg">string</span>&gt;</span><span class="l">&lt;/<span class="tg">resources</span>&gt;</span><span class="l"></span></div><svg class="fold" style="top:19px" viewBox="0 0 9 10" height="10"><path d="M.5.500h8v5.600L4.500 9.500.5 6.100z" fill="#fff" stroke="#b0b0b0"/><path d="M2.500 4h4" stroke="#9a9a9a"/></svg><svg class="fold" style="top:138px" viewBox="0 0 9 10" height="10"><path d="M.5 9.500h8V3.900L4.500.5.5 3.900z" fill="#fff" stroke="#b0b0b0"/><path d="M2.500 6h4" stroke="#9a9a9a"/></svg><svg class="ic" style="left:67px;top:104px" width="12" height="16" viewBox="0 0 12 16"><radialGradient id="bg1" cx=".5" cy=".45" r=".6"><stop offset="0" stop-color="#fdc58a"/><stop offset="1" stop-color="#fba653"/></radialGradient><circle cx="6" cy="6" r="5" fill="url(#bg1)"/><path d="M3.400 9h5.200v1.900H3.400z" fill="#fba653"/><path d="M3.200 4.800h1.400M7.400 4.800h1.400M5.400 4.800h1.200M4.500 5.200v2.200M7.500 5.200v2.200" fill="none" stroke="#fff3dc" stroke-width=".9"/><path d="M3.100 11.400h5.800v1.100H3.100z" fill="#55606a"/><path d="M3.100 12.500h5.800v1H3.100z" fill="#c4c4c4"/><path d="M3.100 13.400h5.800v1.100H3.100z" fill="#6a6a6a"/><path d="M3.400 14.500h5.200v.6H3.400z" fill="#c4c4c4"/><path d="M3.800 15h4.400v.9H3.800z" fill="#6a6a6a"/></svg><svg class="ic" style="left:1156px;top:1px" width="13" height="14" viewBox="0 0 13 14"><path d="M1.800 5l3.300 3.600L11 2" fill="none" stroke="#3aa656" stroke-width="3"/><path d="M1 12.600l1.900-1.900 2 1.900 2-1.900 2 1.900 2-1.900" fill="none" stroke="#3f9a50" stroke-width=".9"/></svg></div>
<div id="bstripe" class="abs"><svg class="ic" style="left:28px;top:4px" width="14" height="14" viewBox="0 0 14 14"><path d="M3.600 14c.2-2.200 2-3.200 4.800-3.200s4.600 1 4.800 3.200z" fill="#2f9bd6"/><circle cx="8.600" cy="7.200" r="3.900" fill="#f8c190"/><path d="M4.400 7c-.2-3.400 1.800-5 4.200-5s4.400 1.600 4.200 5c-1.400-.2-2.400-1-2.800-2-1.200 1.300-3.200 2-5.600 2z" fill="#8c8c8c"/><circle cx="7.200" cy="8" r=".6" fill="#333"/><circle cx="10" cy="8" r=".6" fill="#333"/><ellipse cx="3.300" cy="3.100" rx="3" ry="2.600" fill="#fff" stroke="#4a4a4a" stroke-width=".8"/><path d="M1.800 2.500h3M1.800 3.800h3" stroke="#4a4a4a" stroke-width=".7"/></svg><span class="tx" style="left:45px;top:4.69px;font-size:11px;letter-spacing:0.021px;">TODO</span><svg class="ic" style="left:101.7px;top:4px" width="12.5" height="13.4" viewBox="0 0 14 15" ><path d="M3.2 5.6a3.8 3.6 0 0 1 7.6 0z" fill="#7dad36"/><path d="M4.6 2.3l-1-1.6M9.4 2.3l1-1.6" stroke="#7dad36" stroke-width=".8"/><circle cx="5.3" cy="3.9" r=".55" fill="#fff"/><circle cx="8.7" cy="3.9" r=".55" fill="#fff"/><rect x="3.2" y="6.2" width="7.6" height="6" rx=".8" fill="#7dad36"/><rect x="0.6" y="6.2" width="1.9" height="4.8" rx=".95" fill="#7dad36"/><rect x="11.5" y="6.2" width="1.9" height="4.8" rx=".95" fill="#7dad36"/><rect x="4.5" y="11" width="1.9" height="3.8" rx=".9" fill="#7dad36"/><rect x="7.6" y="11" width="1.9" height="3.8" rx=".9" fill="#7dad36"/></svg><span class="tx" style="left:119.4px;top:4.69px;font-size:11px;letter-spacing:-0.047px;"><u>6</u>: Android Monitor</span><svg class="ic" style="left:245px;top:5px" width="12" height="12" viewBox="0 0 12 12"><rect x=".5" y=".5" width="11" height="11" fill="#fbb968" stroke="#f3a55a"/><path d="M2.500 3.500h7M2.500 6h7M2.500 8.500h7" stroke="#8a5422" stroke-width="1.100" stroke-dasharray="1.600 .7 5 0"/></svg><span class="tx" style="left:262.2px;top:4.69px;font-size:11px;letter-spacing:-0.360px;"><u>0</u>: Messages</span><svg class="ic" style="left:350px;top:5px" width="11" height="11" viewBox="0 0 11 11"><rect x=".5" y=".5" width="10" height="10" fill="#e4e4e4" stroke="#6f6f6f"/><rect x="2" y="3" width="7" height="6" fill="#8b8b8b"/><path d="M3 4.500l1.600 1.500L3 7.500" fill="none" stroke="#fff" stroke-width=".8"/></svg><span class="tx" style="left:366px;top:4.69px;font-size:11px;letter-spacing:0.013px;">Terminal</span><svg class="ic" style="left:1375px;top:3px" width="16" height="15" viewBox="0 0 16 15"><circle cx="7.400" cy="7.200" r="7.200" fill="#ef7670"/><path d="M10 11.800l5.200 3-2.200-6z" fill="#ef7670"/></svg><span class="tx" style="left:1379.6px;top:5.96px;font-size:9.5px;font-weight:bold;color:#fff;">2</span><span class="tx" style="left:1395.3px;top:4.69px;font-size:11px;letter-spacing:-0.362px;">Event Log</span><svg class="ic" style="left:1471px;top:5px" width="12" height="11" viewBox="0 0 12 11"><rect x=".5" y=".5" width="11" height="10" fill="#a9dbf1" stroke="#5c6166"/><path d="M0 .8h12" stroke="#3b7fa3" stroke-width="1.600"/><path d="M2.500 4.500h6.500M2.500 6.500h5M2.500 8.500h4" stroke="#2e3a42" stroke-width="1"/></svg><span class="tx" style="left:1488.5px;top:4.69px;font-size:11px;letter-spacing:-0.169px;">Gradle Console</span></div>
<div id="status" class="abs"><div class="abs" style="left:5px;top:3px;width:14px;height:12px;background:#c2c2c2;border:1px solid #5a5a5e;box-shadow:inset 1px 1px 0 #e9e9e9"></div><div class="abs" style="left:5px;top:16px;width:14px;height:1px;background:#5a5a5e"></div><span class="tx" style="left:31.3px;top:4.69px;font-size:11px;letter-spacing:-0.193px;">Gradle build finished with 15 warnings(s) in 46s 654ms (4 minutes ago)</span><span class="tx" style="left:1270.6px;top:4.69px;font-size:11px;letter-spacing:-0.326px;">9:78</span><span class="tx" style="left:1305.6px;top:4.69px;font-size:11px;letter-spacing:-0.034px;">LF</span><svg class="ic" style="left:1318px;top:5px" width="6" height="9" viewBox="0 0 6 9"><path d="M.4 3.600L3 .4l2.600 3.200zM.4 5.400L3 8.600l2.600-3.200z" fill="#333"/></svg><span class="tx" style="left:1338.2px;top:4.69px;font-size:11px;letter-spacing:0.304px;color:#8c8c8c;">UTF-8</span><span class="tx" style="left:1383.2px;top:4.69px;font-size:11px;letter-spacing:-0.181px;color:#8c8c8c;">Context: &lt;no context&gt;</span><svg class="ic" style="left:1534px;top:5px" width="11" height="10" viewBox="0 0 11 10"><path d="M1.200 4.600V2.600a1.800 1.800 0 0 1 3.600 0v1" fill="none" stroke="#7a7a7a" stroke-width="1.100"/><rect x="3.400" y="4" width="7" height="5.600" fill="#7a7a7a"/><rect x="6.200" y="5.600" width="1.400" height="2.200" fill="#ececec"/></svg><svg class="ic" style="left:1557px;top:3px" width="14" height="14" viewBox="0 0 14 14"><path d="M3.400 5.200C3.400 2 5 1 7 1s3.600 1 3.600 4.200" fill="#d9d9d9" stroke="#666" stroke-width=".9"/><path d="M2.200 5.400h9.600" stroke="#666" stroke-width="1.100"/><path d="M3.600 5.600c0 3.400 1.400 5 3.400 5s3.400-1.600 3.400-5" fill="#f2f2f2" stroke="#666" stroke-width=".9"/><circle cx="5.600" cy="7.200" r=".7" fill="#444"/><circle cx="8.400" cy="7.200" r=".7" fill="#444"/><path d="M1.200 13.600c.4-2 1.800-2.800 3.400-3M12.800 13.600c-.4-2-1.800-2.800-3.400-3M5.400 9.200h3.200" fill="none" stroke="#666" stroke-width=".9"/></svg><svg class="ic" style="left:1581px;top:3.500px" width="13" height="13" viewBox="0 0 13 13"><circle cx="6.500" cy="6.500" r="6.300" fill="#e8605a"/><path d="M6.500 2.600v4.800" stroke="#fff" stroke-width="2"/><circle cx="6.500" cy="9.900" r="1.100" fill="#fff"/></svg></div>
<i class="abs" style="left:0;top:0;width:4px;height:4px;background:radial-gradient(circle at 100% 100%,transparent 3.300px,#000 4.300px)"></i><i class="abs" style="left:0;top:826px;width:4px;height:4px;background:radial-gradient(circle at 100% 0,transparent 3.300px,#000 4.300px)"></i><i class="abs" style="left:1596px;top:0;width:2px;height:2px;background:radial-gradient(circle at 0 100%,transparent 1.400px,#444 2.400px)"></i>
</body></html>
